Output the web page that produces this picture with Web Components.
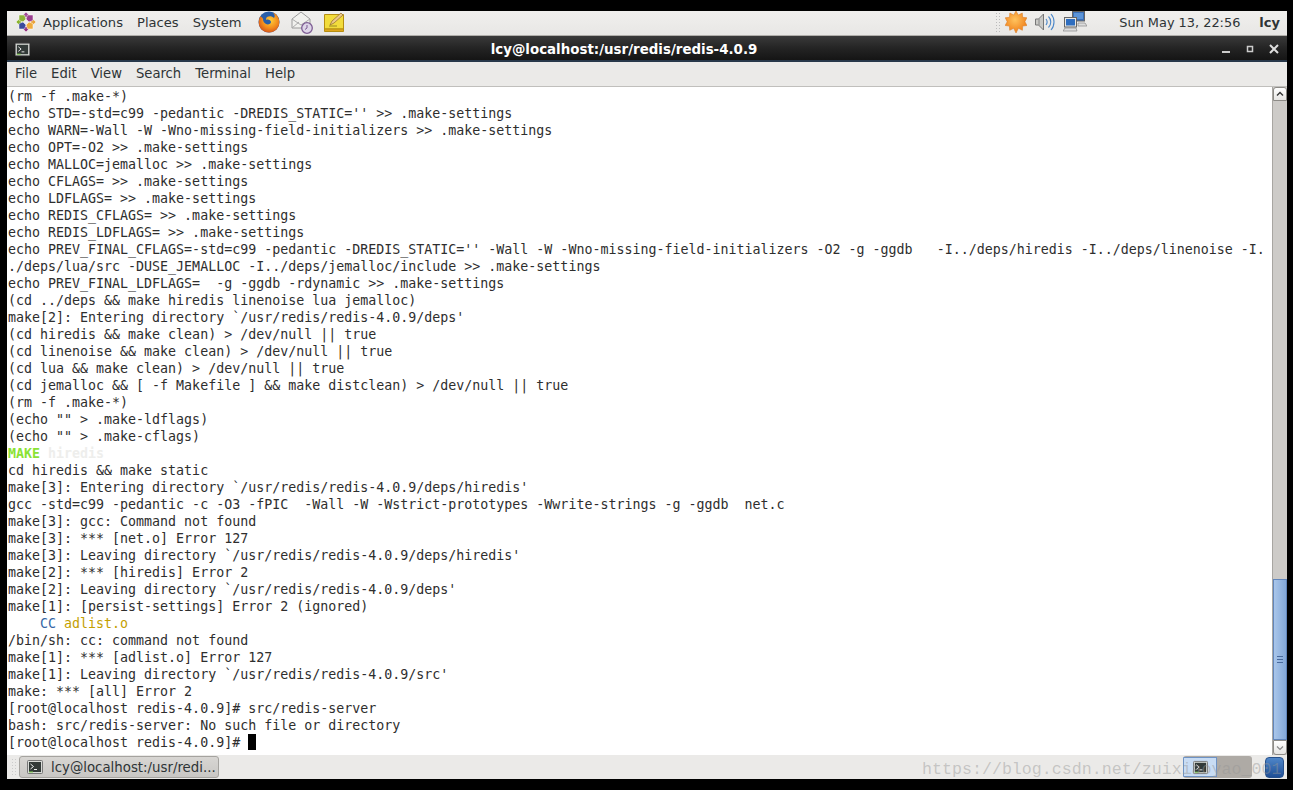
<!DOCTYPE html>
<html><head><meta charset="utf-8"><style>
html,body{margin:0;padding:0;background:#000;height:100%;overflow:hidden}
</style></head><body>
<x-desktop></x-desktop>
<script>
const TERM=`<svg width="SZ" height="SZ" viewBox="0 0 16 16"><rect x=".5" y="1.5" width="15" height="13" rx="1" fill="#d8dad6" stroke="#777"/><rect x="2" y="3" width="12" height="10" fill="#333a38"/><path d="M3.5 5l3 2.5-3 2.5" fill="none" stroke="#eee" stroke-width="1"/><path d="M7 10.5h3" stroke="#eee"/><path d="M2 13h4" stroke="#7fd34a"/></svg>`;
const ICONS={
logo:`<svg width="22" height="22" viewBox="0 0 22 22"><g stroke="#fff" stroke-width=".5"><path d="M11 1l3 3-3 3-3-3z" fill="#a04a96"/><path d="M21 11l-3 3-3-3 3-3z" fill="#e8a33a"/><path d="M11 21l-3-3 3-3 3 3z" fill="#93327f"/><path d="M1 11l3-3 3 3-3 3z" fill="#8bb42e"/><path d="M4 4h5.5L11 8 8 11 4 9.5z" fill="#8fb339"/><path d="M18 4v5.500L14 11l-3-3 1.500-4z" fill="#9a3f8f"/><path d="M18 18h-5.500L11 14l3-3 4 1.500z" fill="#efab3c"/><path d="M4 18v-5.500L8 11l3 3-1.500 4z" fill="#3a4a9c"/></g></svg>`,
fox:`<svg width="22" height="22" viewBox="0 0 22 22"><defs><radialGradient id="g" cx=".55" cy=".4" r=".7"><stop offset="0" stop-color="#ffd23c"/><stop offset=".55" stop-color="#f28a1c"/><stop offset="1" stop-color="#c8421a"/></radialGradient></defs><circle cx="11" cy="11" r="10.500" fill="#2a5ea8"/><path d="M2.500 5C0 9 0 15 3.500 18.500c4 4 11 4 15 0 3.500-3.500 3.500-9 1.500-12.500-1-2-3-4-5-4.500 2 2 2 4 1 5.500-2-2-5-2-7-1-1 1-1 2-1 3 2-1 5 0 5 2 0 2-3 3-5 2-2-1-3-3-3-5 0-1-1.500-2-3-3z" fill="url(#g)"/></svg>`,
mail:`<svg width="24" height="24" viewBox="0 0 24 24"><path d="M2 9l9-7 9 7v9H2z" fill="#f1f1ee" stroke="#9a9a9a"/><path d="M2 9l9 6 9-6M2 18l7-6M20 18l-4-3" fill="none" stroke="#aaa"/><circle cx="17" cy="18" r="5.300" fill="#ded6e8" stroke="#7d5c93" stroke-width="1.300"/><path d="M17 15v3l-2 1.500" fill="none" stroke="#7d5c93"/></svg>`,
note:`<svg width="22" height="22" viewBox="0 0 22 22"><path d="M1.500 3.500h19v14.500h-19z" fill="#f2dc3c" stroke="#b68f12"/><path d="M1.500 18h19v2.500h-19z" fill="#e0a71c" stroke="#b68f12"/><path d="M7 14l2-4 9-8 2 2-9 8z" fill="#ebc98a" stroke="#8f6a2a" stroke-width=".7"/><path d="M6 15h8" stroke="#9a8a20"/></svg>`,
sun:`<svg width="22" height="22" viewBox="0 0 22 22"><defs><radialGradient id="s" cx=".45" cy=".4" r=".6"><stop offset="0" stop-color="#ffc35e"/><stop offset="1" stop-color="#f0801a"/></radialGradient></defs><path d="M11 0l2.300 4 4-2 .3 4.300 4.300.4-2 4 2.100 3.800-4.300.6-.3 4.200-4-2L11 22l-2.300-4.700-4 2-.3-4.200-4.300-.6 2.100-3.800-2-4 4.300-.4.3-4.300 4 2z" fill="url(#s)" stroke="#d9761c" stroke-width=".5"/></svg>`,
speaker:`<svg width="22" height="22" viewBox="0 0 22 22"><path d="M1.500 8h3l5-5v16l-5-5h-3z" fill="#c9c9c6" stroke="#777"/><path d="M5 8v6" stroke="#888"/><path d="M12 8c1.500 2 1.500 4 0 6M14.500 5.500c3 3 3 8 0 11M17 3c4 4.500 4 11.500 0 16" fill="none" stroke="#4a86c8" stroke-width="1.100"/></svg>`,
net:`<svg width="24" height="22" viewBox="0 0 24 22"><rect x="9.500" y=".5" width="12" height="9.500" fill="#3a6fb8" stroke="#666"/><path d="M11 2h9v6h-9z" fill="#5b94d8"/><rect x="1.500" y="6.500" width="12" height="9.500" fill="#e8e8e6" stroke="#666"/><path d="M3 8h9v6.500H3z" fill="#2f6ebf"/><path d="M0 20l2-3h11l1 3z" fill="#ddd" stroke="#888" stroke-width=".7"/><path d="M15 12h7l2 3h-9z" fill="#ddd" stroke="#888" stroke-width=".7"/></svg>`,
termS:TERM.replace(/SZ/g,'16'),term:TERM.replace(/SZ/g,'15'),
};
class XIcon extends HTMLElement{connectedCallback(){const s=this.attachShadow({mode:'open'});s.innerHTML=`<style>:host{display:inline-flex;align-items:center;justify-content:center;line-height:0}</style>`+ICONS[this.getAttribute('name')];}}
customElements.define('x-icon',XIcon);

class XDesktop extends HTMLElement{connectedCallback(){const s=this.attachShadow({mode:'open'});s.innerHTML=`<style>
:host{display:block;box-sizing:border-box;width:1293px;height:790px;padding:11px 6px 11px 7px;background:#000;font-family:"DejaVu Sans",sans-serif}
.screen{height:768px;display:flex;flex-direction:column;background:#ebeae8;position:relative;overflow:hidden}
x-terminal{flex:1;min-height:0}
</style><div class="screen"><x-top-panel></x-top-panel><x-titlebar></x-titlebar><x-menubar></x-menubar><x-terminal></x-terminal><x-task-panel></x-task-panel></div>`;}}
customElements.define('x-desktop',XDesktop);

class XTopPanel extends HTMLElement{connectedCallback(){const s=this.attachShadow({mode:'open'});s.innerHTML=`<style>
:host{display:flex;align-items:center;box-sizing:border-box;height:25px;background:linear-gradient(#f0efed,#e8e7e5);border-bottom:1px solid #b0aeaa;font-size:13.1px;color:#2e3436;padding-bottom:2px}
.l{margin-left:6px;display:flex;gap:14px}
.launch{display:flex;align-items:center;margin-left:17px;gap:10px}
.sp{flex:1}
.grip{width:6px;height:20px;margin-right:4px;background:radial-gradient(#bbb 40%,transparent 45%) 0 0/3px 3px}
.tray{display:flex;align-items:center;gap:7px}
.clock{margin-left:32px;font-size:12.9px}.user{font-weight:bold;margin:0 7px 0 19px;font-size:13px}
</style><x-icon name="logo" style="margin-left:8px"></x-icon><div class="l"><span>Applications</span><span>Places</span><span>System</span></div>
<div class="launch"><x-icon name="fox"></x-icon><x-icon name="mail"></x-icon><x-icon name="note" style="margin-left:-1px"></x-icon></div><div class="sp"></div>
<div class="grip"></div><div class="tray"><x-icon name="sun"></x-icon><x-icon name="speaker"></x-icon><x-icon name="net"></x-icon></div><span class="clock">Sun May 13, 22:56</span><span class="user">lcy</span>`;}}
customElements.define('x-top-panel',XTopPanel);

class XTitlebar extends HTMLElement{connectedCallback(){const s=this.attachShadow({mode:'open'});s.innerHTML=`<style>
:host{display:flex;align-items:center;box-sizing:border-box;height:26px;background:linear-gradient(#3a3a3a,#242424 50%,#151515);border-bottom:2px solid #28384a;color:#fff;font-weight:bold;font-size:13.4px;padding:2px 8px 0 8px;position:relative}
.t{flex:1;text-align:center;padding-right:4px}
.b{display:flex;gap:14px;align-items:center;color:#ddd}
svg{display:block}
</style><x-icon name="term"></x-icon><div class="t">lcy@localhost:/usr/redis/redis-4.0.9</div>
<div class="b"><svg width="9" height="9" style="margin-right:1px"><rect y="6" width="8" height="2" fill="#ccc"/></svg><svg width="9" height="9"><rect x="1.500" y="1.500" width="5" height="5" fill="none" stroke="#ccc" stroke-width="1.500"/></svg><svg width="10" height="10"><path d="M1 1l8 8M9 1l-8 8" stroke="#ddd" stroke-width="2"/></svg></div>`;}}
customElements.define('x-titlebar',XTitlebar);

class XMenubar extends HTMLElement{connectedCallback(){const s=this.attachShadow({mode:'open'});s.innerHTML=`<style>
:host{display:flex;align-items:center;box-sizing:border-box;height:25px;background:#ebeae8;border-bottom:1px solid #c0bfbc;font-size:13.2px;color:#2e3436;padding:0 0 1px 8px;gap:14px}
</style><span>File</span><span>Edit</span><span>View</span><span>Search</span><span>Terminal</span><span>Help</span>`;}}
customElements.define('x-menubar',XMenubar);

const LINES=`(rm -f .make-*)
echo STD=-std=c99 -pedantic -DREDIS_STATIC='' >> .make-settings
echo WARN=-Wall -W -Wno-missing-field-initializers >> .make-settings
echo OPT=-O2 >> .make-settings
echo MALLOC=jemalloc >> .make-settings
echo CFLAGS= >> .make-settings
echo LDFLAGS= >> .make-settings
echo REDIS_CFLAGS= >> .make-settings
echo REDIS_LDFLAGS= >> .make-settings
echo PREV_FINAL_CFLAGS=-std=c99 -pedantic -DREDIS_STATIC='' -Wall -W -Wno-missing-field-initializers -O2 -g -ggdb   -I../deps/hiredis -I../deps/linenoise -I.
./deps/lua/src -DUSE_JEMALLOC -I../deps/jemalloc/include >> .make-settings
echo PREV_FINAL_LDFLAGS=  -g -ggdb -rdynamic >> .make-settings
(cd ../deps && make hiredis linenoise lua jemalloc)
make[2]: Entering directory \`/usr/redis/redis-4.0.9/deps'
(cd hiredis && make clean) > /dev/null || true
(cd linenoise && make clean) > /dev/null || true
(cd lua && make clean) > /dev/null || true
(cd jemalloc && [ -f Makefile ] && make distclean) > /dev/null || true
(rm -f .make-*)
(echo "" > .make-ldflags)
(echo "" > .make-cflags)
@@MAKE
cd hiredis && make static
make[3]: Entering directory \`/usr/redis/redis-4.0.9/deps/hiredis'
gcc -std=c99 -pedantic -c -O3 -fPIC  -Wall -W -Wstrict-prototypes -Wwrite-strings -g -ggdb  net.c
make[3]: gcc: Command not found
make[3]: *** [net.o] Error 127
make[3]: Leaving directory \`/usr/redis/redis-4.0.9/deps/hiredis'
make[2]: *** [hiredis] Error 2
make[2]: Leaving directory \`/usr/redis/redis-4.0.9/deps'
make[1]: [persist-settings] Error 2 (ignored)
@@CC
/bin/sh: cc: command not found
make[1]: *** [adlist.o] Error 127
make[1]: Leaving directory \`/usr/redis/redis-4.0.9/src'
make: *** [all] Error 2
[root@localhost redis-4.0.9]# src/redis-server
bash: src/redis-server: No such file or directory
@@PROMPT`.split('\n');
class XTerminal extends HTMLElement{connectedCallback(){const s=this.attachShadow({mode:'open'});s.innerHTML=`<style>
:host{display:flex;background:#fff}
.out{flex:1;min-width:0;overflow:hidden;padding:1px 0 0 1px;font:13.302px/17px "DejaVu Sans Mono",monospace;color:#2e2e2e}
.ln{height:17px;white-space:pre}
.mk{color:#8ae234;font-weight:bold}.hr{color:#eeeeec;font-weight:bold}.cc{color:#3465a4}.ad{color:#c4a000}
.cur{display:inline-block;width:8px;height:16px;background:#000;vertical-align:-3px}
</style><div class="out"></div><x-scrollbar></x-scrollbar>`;
const o=s.querySelector('.out');const esc=t=>t.replace(/&/g,'&amp;').replace(/</g,'&lt;').replace(/>/g,'&gt;');
o.innerHTML=LINES.map(l=>{let h=esc(l);
if(l==='@@MAKE')h='<span class="mk">MAKE</span> <span class="hr">hiredis</span>';
if(l==='@@CC')h='    <span class="cc">CC</span> <span class="ad">adlist.o</span>';
if(l==='@@PROMPT')h='[root@localhost redis-4.0.9]# <span class="cur"></span>';
return `<div class="ln">${h}</div>`}).join('');}}
customElements.define('x-terminal',XTerminal);

class XScrollbar extends HTMLElement{connectedCallback(){const s=this.attachShadow({mode:'open'});s.innerHTML=`<style>
:host{display:flex;flex-direction:column;box-sizing:border-box;width:15px;background:#cdcbc8;border-left:1px solid #a8a6a2}
.btn{height:14px;background:linear-gradient(#fff,#e6e5e3);border:1px solid #8d8b87;box-sizing:border-box;display:flex;align-items:center;justify-content:center}
.top{border-radius:3px 3px 0 0}.bot{border-radius:0 0 3px 3px;height:15px}
.tr{flex:1}
.th{height:161px;background:linear-gradient(90deg,#a9c6ea,#84a8d8);border:1px solid #6286bb;box-sizing:border-box;display:flex;align-items:center;justify-content:center;flex-direction:column;gap:2px}
.th i{display:block;width:6px;height:1px;background:#4a6a9c}
svg{display:block}
</style><div class="btn top"><svg width="8" height="6"><path d="M1 4.500l3-3 3 3" fill="none" stroke="#333" stroke-width="1.400"/></svg></div><div class="tr"></div><div class="th"><i></i><i></i><i></i></div><div class="btn bot"><svg width="8" height="6"><path d="M1 1.500l3 3 3-3" fill="none" stroke="#888" stroke-width="1.200"/></svg></div>`;}}
customElements.define('x-scrollbar',XScrollbar);

class XTaskPanel extends HTMLElement{connectedCallback(){const s=this.attachShadow({mode:'open'});s.innerHTML=`<style>
:host{display:flex;align-items:center;box-sizing:border-box;height:24px;background:#ebeae8;font-size:13.33px;color:#2e3436;position:relative}
.grip{width:6px;height:18px;margin-left:4px;background:radial-gradient(#ccc 40%,transparent 45%) 0 0/3px 3px}
.task{display:flex;align-items:center;box-sizing:border-box;width:200px;height:22px;margin-left:2px;padding-left:7px;gap:8px;border:1px solid #a5a39f;border-radius:3px;background:linear-gradient(#d8d6d3,#c9c7c4);white-space:nowrap}
.sp{flex:1}
.ws{display:flex;width:69px;height:22px;border-radius:3px;background:#aeaaa5;overflow:hidden;margin-right:13px}
.ws b{display:flex;align-items:center;justify-content:center;box-sizing:border-box;width:34px;height:20px;margin-top:1px;background:#c8dcf4;border:1px solid #6f93c4}
.trash{width:19px;height:21px;border-radius:4px;background:linear-gradient(#4f86c8,#1f4f96);border:1px solid #27518c;box-sizing:border-box;margin-right:3px}
.wm{position:absolute;left:915px;top:5px;height:19px;overflow:hidden;font:16.65px/20px "Liberation Mono",monospace;color:rgba(150,150,150,.45);white-space:nowrap;pointer-events:none}
</style><div class="grip"></div><div class="task"><x-icon name="termS"></x-icon><span>lcy@localhost:/usr/redi...</span></div><div class="sp"></div><div class="ws"><b><x-icon name="term"></x-icon></b></div><div class="trash"></div><div class="wm">https://blog.csdn.net/zuixiaoyao_001</div>`;}}
customElements.define('x-task-panel',XTaskPanel);
</script></body></html>
